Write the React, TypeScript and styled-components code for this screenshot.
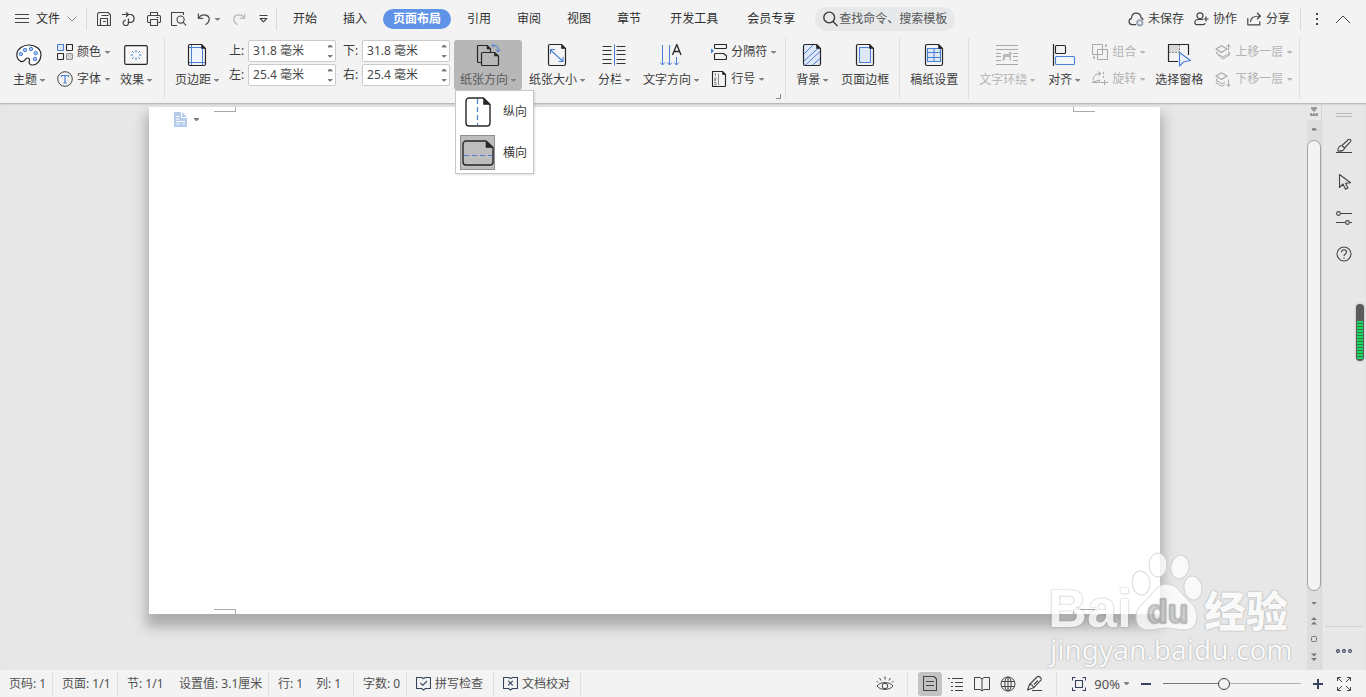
import React from 'react';
import styled, { createGlobalStyle, css } from 'styled-components';

const INK = '#3c3c3c';
const DARK = '#262626';
const BLUE = '#4a7fd6';
const PALE = '#dfe8f7';
const MUTED = '#b4b4b4';

const GlobalStyle = createGlobalStyle`
  *, *::before, *::after { box-sizing: border-box; }
  body {
    margin: 0;
    background: #e7e7e7;
    color: ${INK};
    font: 12px/16px "Noto Sans", "Noto Sans CJK SC", sans-serif;
    overflow: hidden;
  }
  button, input {
    margin: 0;
    padding: 0;
    border: 0;
    background: none;
    color: inherit;
    font: inherit;
  }
  svg { display: block; flex: none; }
`;

/* ---------- shared ---------- */

const Shell = styled.div`
  display: flex;
  flex-direction: column;
  height: 100vh;
`;

const Caret = styled.i<{ $up?: boolean }>`
  flex: none;
  width: 5px;
  height: 3px;
  background: #808080;
  clip-path: ${p => (p.$up
    ? 'polygon(0 100%, 100% 100%, 100% 70%, 60% 0, 40% 0, 0 70%)'
    : 'polygon(0 0, 100% 0, 100% 30%, 60% 100%, 40% 100%, 0 30%)')};
`;

/* ---------- tab bar ---------- */

const TopBar = styled.header`
  display: flex;
  align-items: center;
  height: 38px;
  flex: none;
  background: #f3f3f3;
`;

const TopRule = styled.span`
  width: 1px;
  height: 22px;
  background: #dadada;
`;

const FileButton = styled.button`
  display: flex;
  align-items: center;
  gap: 7px;
  padding: 0 9px 0 15px;
  color: #2e2e2e;
`;

const QuickTools = styled.div`
  display: flex;
  align-items: center;
  padding-left: 4px;
`;

const QuickButton = styled.button<{ $split?: boolean }>`
  display: flex;
  align-items: center;
  justify-content: center;
  gap: 4px;
  width: ${p => (p.$split ? 35 : 25)}px;
  height: 24px;
`;

const Tabs = styled.nav`
  display: flex;
  gap: 6px;
  padding: 0 10px 0 6px;
`;

const Tab = styled.button<{ $active?: boolean; $spaced?: boolean }>`
  height: 20px;
  padding: 0 10px;
  border-radius: 10px;
  line-height: 20px;
  white-space: nowrap;
  color: #2e2e2e;
  margin-left: ${p => (p.$spaced ? 3 : 0)}px;
  ${p => p.$active && css`
    background: #5f93e8;
    color: #fff;
    font-weight: 700;
  `}
`;

const Search = styled.label`
  display: flex;
  align-items: center;
  gap: 1px;
  width: 140px;
  height: 24px;
  padding-left: 8px;
  border-radius: 12px;
  background: #e6e8ea;
  input {
    width: 112px;
    outline: 0;
  }
  input::placeholder {
    color: #555;
    opacity: 1;
  }
`;

const TopActions = styled.div`
  display: flex;
  align-items: center;
  margin-left: auto;
  padding-right: 9px;
`;

const ActionButton = styled.button`
  display: flex;
  align-items: center;
  gap: 4px;
  height: 24px;
  margin-right: 10px;
  white-space: nowrap;
`;

const GlyphButton = styled.button`
  display: flex;
  align-items: center;
  justify-content: center;
  width: 28px;
  height: 24px;
`;

/* ---------- ribbon ---------- */

const Ribbon = styled.section`
  display: flex;
  height: 65px;
  flex: none;
  padding-left: 7px;
  background: #f3f3f3;
`;

const Group = styled.div<{ $roomy?: boolean }>`
  position: relative;
  display: flex;
  gap: 1px;
  padding: 2px ${p => (p.$roomy ? 2 : 0)}px 0 0;
`;

const GroupRule = styled.span`
  width: 1px;
  height: 61px;
  margin: 0 4px;
  background: #dfdfdf;
`;

const BigButton = styled.button<{ $open?: boolean }>`
  display: flex;
  flex-direction: column;
  align-items: center;
  justify-content: space-between;
  height: 50px;
  padding: 3px 6px 2px;
  border-radius: 3px;
  white-space: nowrap;
  background: ${p => (p.$open ? '#b7b7b7' : 'transparent')};
  color: ${p => (p.$open ? '#5a5a5a' : INK)};
  &:disabled { color: ${MUTED}; }
  &:disabled i { background: ${MUTED}; }
`;

const IconSlot = styled.span`
  display: flex;
  align-items: center;
  justify-content: center;
  height: 24px;
`;

const Caption = styled.span`
  display: flex;
  align-items: center;
  gap: 3px;
`;

const Stack = styled.div`
  display: flex;
  flex-direction: column;
  gap: 3px;
`;

const SmallButton = styled.button`
  display: flex;
  align-items: center;
  gap: 4px;
  height: 24px;
  padding: 0 3px 0 5px;
  white-space: nowrap;
  &:disabled { color: ${MUTED}; }
  &:disabled i { background: ${MUTED}; }
`;

const Margins = styled.div`
  display: grid;
  grid-template-columns: auto auto;
  grid-auto-rows: 22px;
  gap: 2px 7px;
  margin: 0 3px;
`;

const Field = styled.label`
  display: flex;
  align-items: center;
`;

const FieldName = styled.span`
  width: 19px;
`;

const Spinner = styled.span`
  display: flex;
  width: 88px;
  height: 22px;
  border: 1px solid #cbcbcb;
  border-radius: 2px;
  background: #fff;
  input {
    flex: 1;
    min-width: 0;
    padding-left: 4px;
    color: #4a4a4a;
    outline: 0;
  }
`;

const Steps = styled.span`
  display: flex;
  flex-direction: column;
  width: 10px;
  button {
    flex: 1;
    display: flex;
    align-items: center;
    justify-content: center;
  }
`;

const Launcher = styled.button`
  position: absolute;
  right: 0;
  bottom: 4px;
  width: 5px;
  height: 5px;
  border: solid #8a8a8a;
  border-width: 0 1px 1px 0;
`;

const MenuAnchor = styled.div`
  position: relative;
`;

const Menu = styled.ul`
  position: absolute;
  z-index: 5;
  top: 50px;
  left: 1px;
  display: flex;
  flex-direction: column;
  gap: 6px;
  margin: 0;
  padding: 3px 6px 3px 4px;
  list-style: none;
  border: 1px solid #c6c6c6;
  background: #fff;
  box-shadow: 1px 1px 2px rgba(0, 0, 0, .12);
`;

const MenuItem = styled.button<{ $selected?: boolean }>`
  display: flex;
  align-items: center;
  gap: 8px;
  white-space: nowrap;
  > span {
    display: flex;
    align-items: center;
    justify-content: center;
    width: 35px;
    height: 35px;
    border: 1px solid ${p => (p.$selected ? '#8f8f8f' : 'transparent')};
    background: ${p => (p.$selected ? '#bdbdbd' : 'transparent')};
  }
`;

/* ---------- workspace ---------- */

const Workspace = styled.main`
  position: relative;
  display: flex;
  flex: 1;
  min-height: 0;
  overflow: hidden;
  background: #e7e7e7;
  box-shadow: inset 0 2px 2px -1px rgba(0, 0, 0, .25);
`;

const Canvas = styled.div`
  display: flex;
  flex: 1;
  padding: 4px 147px 56px 149px;
`;

const Paper = styled.article`
  position: relative;
  flex: 1;
  padding: 5px 25px;
  background: #fff;
  box-shadow: 0 10px 12px 3px rgba(0, 0, 0, .26);
`;

const PasteTag = styled.button`
  display: flex;
  align-items: center;
  gap: 7px;
`;

const Crop = styled.span<{ $v: 'top' | 'bottom'; $h: 'left' | 'right' }>`
  position: absolute;
  width: 22px;
  height: 5px;
  ${p => p.$v}: 0;
  ${p => p.$h}: 65px;
  border: 0 solid #a9a9a9;
  border-${p => (p.$v === 'top' ? 'bottom' : 'top')}-width: 1px;
  border-${p => (p.$h === 'left' ? 'right' : 'left')}-width: 1px;
`;

const ScrollColumn = styled.div`
  display: flex;
  flex-direction: column;
  align-items: center;
  width: 14px;
  padding: 4px 0;
  background: linear-gradient(transparent 17px, #dedede 17px);
  button {
    display: flex;
    align-items: center;
    justify-content: center;
    width: 14px;
    height: 18px;
  }
`;

const ScrollThumb = styled.div`
  flex: 1;
  width: 14px;
  margin: 2px 0 3px;
  border: 1px solid #a3a3a3;
  border-radius: 7px;
  background: #f3f3f3;
`;

const SidePane = styled.aside`
  display: flex;
  flex-direction: column;
  align-items: center;
  width: 45px;
  padding-top: 10px;
  border-left: 1px solid #d5d5d5;
`;

const Grip = styled.span`
  width: 16px;
  height: 4px;
  margin-bottom: 11px;
  border: solid #bcbcbc;
  border-width: 1px 0;
`;

const SideButton = styled.button`
  display: flex;
  align-items: center;
  justify-content: center;
  width: 36px;
  height: 36px;
`;

const SideMore = styled.div`
  display: flex;
  justify-content: center;
  margin-top: auto;
  width: 38px;
  padding: 6px 0 1px;
  border-top: 1px solid #d2d2d2;
`;

const Meter = styled.div`
  position: absolute;
  top: 201px;
  right: 2px;
  width: 8px;
  height: 57px;
  padding: 17px 1px 2px;
  border-radius: 4px;
  background: #5c5c5c;
  box-shadow: 0 0 2px rgba(0, 0, 0, .3);
  &::before {
    content: '';
    display: block;
    height: 38px;
    background: repeating-linear-gradient(#1ed760 0 2px, #2a7d47 2px 3px);
  }
`;

const Watermark = styled.div`
  position: absolute;
  z-index: 3;
  right: 74px;
  bottom: 4px;
  width: 246px;
  opacity: .78;
  color: #fff;
  pointer-events: none;
  text-shadow: 0 0 2px rgba(0, 0, 0, .3), 0 0 1px rgba(0, 0, 0, .25);
`;

const WatermarkTop = styled.div`
  display: flex;
  align-items: flex-end;
  height: 84px;
  padding-left: 2px;
  b {
    width: 82px;
    font: 700 54px/48px "Liberation Sans", sans-serif;
  }
  strong {
    font: 900 42px/46px "Noto Sans CJK SC", sans-serif;
    white-space: nowrap;
  }
`;

const WatermarkUrl = styled.div`
  padding-left: 4px;
  font: 400 28px/34px "Noto Sans", sans-serif;
  white-space: nowrap;
`;

/* ---------- status bar ---------- */

const StatusBar = styled.footer`
  display: flex;
  align-items: center;
  height: 27px;
  flex: none;
  background: #f3f3f3;
  color: #505050;
`;

const StatusItem = styled.button<{ $w: number }>`
  display: flex;
  align-items: center;
  gap: 4px;
  width: ${p => p.$w}px;
  height: 27px;
  padding-left: 9px;
  white-space: nowrap;
`;

const StatusRule = styled.span<{ $gap?: number }>`
  width: 1px;
  height: 24px;
  margin: 0 ${p => p.$gap ?? 0}px;
  background: #dfdfdf;
`;

const StatusRight = styled.div`
  display: flex;
  align-items: center;
  margin-left: auto;
  padding-right: 9px;
`;

const ViewButton = styled.button<{ $active?: boolean }>`
  display: flex;
  align-items: center;
  justify-content: center;
  width: 24px;
  height: 24px;
  margin: 0 1px;
  border-radius: 3px;
  background: ${p => (p.$active ? '#c3c3c3' : 'transparent')};
`;

const ZoomValue = styled.button`
  display: flex;
  align-items: center;
  gap: 4px;
  margin: 0 4px 0 2px;
  font-size: 13px;
`;

const ZoomSlider = styled.input`
  width: 138px;
  height: 16px;
  margin: 0 4px;
  appearance: none;
  background: linear-gradient(90deg, #777 44%, #b0b0b0 44%) center / 100% 1px no-repeat;
  &::-webkit-slider-thumb {
    appearance: none;
    width: 12px;
    height: 12px;
    border: 1px solid #444;
    border-radius: 6px;
    background: #f3f3f3;
  }
`;

/* ---------- icons ---------- */

type IconProps = { w: number; h: number; c?: string; sw?: number; children: React.ReactNode };
const Icon = ({ w, h, c = '#444', sw = 1, children }: IconProps) => (
  <svg width={w} height={h} viewBox={`0 0 ${w} ${h}`} fill="none" stroke={c} strokeWidth={sw} strokeLinejoin="round" aria-hidden="true">
    {children}
  </svg>
);

const Sheet = ({ children }: { children?: React.ReactNode }) => (
  <Icon w={20} h={24} c={DARK}>
    {children}
    <path d="M3 1.5H14.5L18.5 5.5V21a1.5 1.5 0 0 1-1.5 1.5H3A1.5 1.5 0 0 1 1.5 21V3A1.5 1.5 0 0 1 3 1.5Z" strokeWidth="1.2" />
    <path d="M14.5 1.5V5.5H18.5Z" fill={DARK} strokeWidth=".6" />
  </Icon>
);

const SaveIcon = () => (
  <Icon w={14} h={14}>
    <path d="M2.5 .5H11L13.5 3V12.5A1 1 0 0 1 12.5 13.5H1.5A1 1 0 0 1 .5 12.5V2.5A2 2 0 0 1 2.5 .5ZM3.5 13.5V6.5H10.5V13.5M4.5 3.5H11.5M6 9.5H9" strokeWidth="1.1" />
  </Icon>
);
const ExportIcon = () => (
  <Icon w={14} h={14} sw={1.2}>
    <path d="M0 2.5H9A4 4 0 0 1 9 10.3H5.5M4 .2L6.4 2.5L4 4.8M6.5 6.5V10.5A2.7 2.7 0 1 1 3.8 8.2" />
  </Icon>
);
const PrintIcon = () => (
  <Icon w={14} h={14} sw={1.1}>
    <path d="M3.5 3.5V.5H10.5V3.5M3.5 10.5H1.7A1.2 1.2 0 0 1 .5 9.3V4.7A1.2 1.2 0 0 1 1.7 3.5H12.3A1.2 1.2 0 0 1 13.5 4.7V9.3A1.2 1.2 0 0 1 12.3 10.5H10.5M3.5 7.5H10.5V13.5H3.5ZM9.5 5.5H11.5" />
  </Icon>
);
const PreviewIcon = () => (
  <Icon w={16} h={14} sw={1.1}>
    <path d="M6 13.5H1.5A1 1 0 0 1 .5 12.5V.5H12.5V3" />
    <circle cx="9.6" cy="7.6" r="3.6" />
    <path d="M12 10.2L15.2 13.6" />
  </Icon>
);
const UndoIcon = ({ flip }: { flip?: boolean }) => (
  <Icon w={14} h={14} sw={1.3} c={flip ? '#bcbcbc' : '#555'}>
    <path d={flip ? 'M12.6 1.5V6.3H7.8M12.4 6C9.5 1.5 1.8 2 1.8 7.5C1.8 10 3.5 11.5 5.5 12.8' : 'M1.4 1.5V6.3H6.2M1.6 6C4.5 1.5 12.2 2 12.2 7.5C12.2 10 10.5 11.5 8.5 12.8'} />
  </Icon>
);
const MoreIcon = () => (
  <Icon w={9} h={8} sw={1.1}><path d="M.5 .5H8.5M1.2 3.5L4.5 6.8L7.8 3.5Z" /></Icon>
);
const CloudIcon = () => (
  <Icon w={16} h={15} sw={1.2}>
    <path d="M8 12.6H4A3.2 3.2 0 0 1 3.5 6.3C3.6 3 5.8 1.2 8.2 1.2C10.8 1.2 12.8 3 13 5.6A3 3 0 0 1 15 8" />
    <circle cx="11.8" cy="10.8" r="3.6" fill="#9aa3b5" stroke="none" />
    <path d="M10.5 9.5L13.1 12.1M13.1 9.5L10.5 12.1" stroke="#fff" />
  </Icon>
);
const PeopleIcon = () => (
  <Icon w={15} h={14} sw={1.2}>
    <circle cx="6" cy="3.8" r="3" />
    <path d="M9 7.5H4.5C2 7.5 .8 8.8 .8 10.5C.8 12 1.8 12.6 3 12.6H9C10.3 12.6 11 11.8 11 11M12 4.5V9.5M9.5 7H14.5" />
  </Icon>
);
const ShareIcon = () => (
  <Icon w={15} h={14} sw={1.2}>
    <path d="M.8 6V12.8H12.8V9.5M3.5 10C3.5 6 6.5 4 12.8 4M10 .8L13.4 4L10 7.2" />
  </Icon>
);

const PaletteIcon = () => (
  <Icon w={26} h={22} c={DARK} sw={1.2}>
    <path d="M5 17.4C1.6 15.8.7 12.5.9 9.8C1.4 4.5 7 1 13 1C19.5 1 25 5 25 10.8C25 16.5 21 21 16.4 21C13.6 21 12.6 19 13.4 16.8C13.9 15.2 13 13.8 11.3 14C8.8 14.2 8.5 18.8 5 17.4Z" fill="#fff" />
    <g stroke={BLUE} strokeWidth="1" fill="#a9c4f0">
      <circle cx="4.9" cy="10" r="1.7" /><circle cx="9" cy="6" r="1.7" /><circle cx="15" cy="5" r="1.7" />
      <circle cx="19.7" cy="9.2" r="1.7" /><circle cx="19" cy="15" r="1.7" />
    </g>
  </Icon>
);
const ColorsIcon = () => (
  <Icon w={16} h={16} c={DARK} sw={1.1}>
    <rect x=".5" y=".5" width="6" height="6" rx=".6" stroke={BLUE} fill={PALE} />
    <rect x="9.5" y=".5" width="6" height="6" rx=".6" />
    <rect x=".5" y="9.5" width="6" height="6" rx=".6" />
    <g stroke="#8d8d8d" strokeWidth="1"><rect x="9.5" y="9.5" width="6" height="6" rx=".6" /><path d="M9.5 13L13 9.5M10 15.5L15.5 10M13 15.5L15.5 13" /></g>
  </Icon>
);
const FontIcon = () => (
  <Icon w={16} h={16}>
    <circle cx="8" cy="8" r="7.3" stroke="#444" />
    <path d="M4.5 6V4.5H11.5V6M8 4.5V12M6.3 12H9.7" stroke={BLUE} strokeWidth="1.2" />
  </Icon>
);
const EffectIcon = () => (
  <Icon w={24} h={20} c={DARK}>
    <rect x=".7" y=".7" width="22.6" height="18.6" rx="1.6" strokeWidth="1.2" fill="#f8f8f8" />
    <path d="M12 5V7.5M12 12.5V15M6.5 10H9M15 10H17.5M8 6L9.8 7.8M14.2 12.2L16 14M16 6L14.2 7.8M9.8 12.2L8 14" stroke={BLUE} />
  </Icon>
);
const MarginIcon = () => (
  <Sheet><path d="M2 4.5H18M2 19.5H18M4.5 2V22M15.5 2V22" stroke={BLUE} /><rect x="4.5" y="4.5" width="11" height="15" stroke={BLUE} fill="#f1f5fc" /></Sheet>
);
const OrientIcon = () => (
  <Icon w={26} h={24} c={DARK} sw={1.2}>
    <path d="M6 19.5H3.5A1 1 0 0 1 2.5 18.5V3.5A1 1 0 0 1 3.5 2.5H12L15.5 6V9" />
    <path d="M12 2.5V6H15.5Z" fill={DARK} strokeWidth=".6" />
    <path d="M7.5 9.5H19.5L23.5 13V21.5A1 1 0 0 1 22.5 22.5H7.5A1 1 0 0 1 6.5 21.5V10.5A1 1 0 0 1 7.5 9.5Z" />
    <path d="M19.5 9.5V13H23Z" fill={DARK} strokeWidth=".6" />
    <path d="M17 2.5H20A3 3 0 0 1 23 5.5V8.5M19 .5L17 2.5L19 4.5M20.8 6.5L23 9L25.2 6.5" stroke={BLUE} strokeWidth="1" />
  </Icon>
);
const SizeIcon = () => (
  <Sheet><path d="M3.5 7L16 18.5M3.5 11V6.5H8M16 14V18.5H11.5" stroke={BLUE} strokeWidth="1.1" /></Sheet>
);
const ColumnsIcon = () => (
  <Icon w={24} h={22} c="#333">
    <path d="M.5 2.5H9.5M.5 6.5H9.5M.5 10.5H9.5M.5 15.5H9.5M.5 19.5H9.5M14.5 2.5H23.5M14.5 6.5H23.5M14.5 10.5H23.5M14.5 15.5H23.5M14.5 19.5H23.5" strokeWidth="1.1" />
    <path d="M12.5 .5V21.5" stroke={BLUE} />
  </Icon>
);
const DirectionIcon = () => (
  <Icon w={24} h={24} c={DARK}>
    <path d="M3.5 2V22M1.2 19.5L3.5 22L5.8 19.5M10.5 2V22M8.2 19.5L10.5 22L12.8 19.5M17.5 14V22M15.2 19.5L17.5 22L19.8 19.5" stroke={BLUE} />
    <path d="M13.5 12L17.8 1.5L22 12M15 8.5H20.5" strokeWidth="1.3" />
  </Icon>
);
const BreakIcon = () => (
  <Icon w={16} h={16} c={DARK} sw={1.1}>
    <path d="M3.5.5V3.5A1 1 0 0 0 4.5 4.5H14.5A1 1 0 0 0 15.5 3.5V.5H3.5M3.5 15.5V10.5A1 1 0 0 1 4.5 9.5H12.5L15.5 12V14.5A1 1 0 0 1 14.5 15.5H3.5Z" />
    <path d="M0 4.2V9.4L3 6.8Z" fill={BLUE} stroke="none" />
  </Icon>
);
const LineNoIcon = () => (
  <Icon w={16} h={16} c={DARK} sw={1.1}>
    <path d="M1.5 .5H11.5L14.5 3.5V14.5A1 1 0 0 1 13.5 15.5H1.5Z" />
    <path d="M11.5.5V3.5H14.5Z" fill={DARK} strokeWidth=".6" />
    <path d="M3.5 2.5H4.5V5M3 7H5V8.5H3.5V9.5H5M3 11.5H5V14H3M7.5 2.5V14" stroke="#888" strokeWidth="1" />
  </Icon>
);
const BackgroundIcon = () => (
  <Sheet><rect x="2" y="2" width="16" height="20" fill={PALE} stroke="none" /><path d="M2 11L11 2M2 18L17 4.5M3 22.5L18 8.5M10 22.5L18 15.5" stroke={BLUE} /></Sheet>
);
const BorderIcon = () => (
  <Sheet><rect x="4.5" y="4.5" width="11" height="15" stroke={BLUE} fill={PALE} strokeWidth="1.1" /></Sheet>
);
const GridIcon = () => (
  <Sheet><rect x="3.5" y="5.5" width="13" height="13" stroke={BLUE} fill={PALE} strokeWidth="1.1" /><path d="M4 9.5H16M4 14.5H16M10 5.5V9.5M10 9.5V18.5" stroke={BLUE} /></Sheet>
);
const WrapIcon = () => (
  <Icon w={24} h={22} c="#a8a8a8">
    <path d="M1 1.5H23M1 5.5H23M1 9.5H6M18 9.5H23M1 12.5H6M18 12.5H23M1 16.5H6M18 16.5H23M1 20.5H23" />
    <path d="M7.5 16.5L8 11L9.5 10H13.5L14.5 7.5L17 8.5L16 11V16.5H14.5V13H10.5L9.5 16.5Z" fill="#b9b9b9" stroke="none" />
  </Icon>
);
const AlignIcon = () => (
  <Icon w={24} h={24} c={DARK}>
    <path d="M1.5 1V23" strokeWidth="1.2" />
    <rect x="3.5" y="2.5" width="10" height="8" rx="1" strokeWidth="1.1" />
    <rect x="3.5" y="13.5" width="19" height="8" rx="1" stroke={BLUE} strokeWidth="1.1" fill="#f2f6fd" />
  </Icon>
);
const CombineIcon = () => (
  <Icon w={16} h={16} c="#a8a8a8"><rect x=".5" y=".5" width="10" height="10" /><rect x="5.5" y="5.5" width="10" height="10" /><path d="M13 1.5H15M1 13.5H3" strokeWidth="2" /></Icon>
);
const RotateIcon = () => (
  <Icon w={16} h={16} c="#a8a8a8"><path d="M1 9.5C1 5 4 2.5 8.5 2.5M6 .5L8.8 2.5L6 5M0 11.5L7.5 9V11.5H0M8.5 11.5H16M12.5 9V14M11.5 1V3M11.5 5V7" /></Icon>
);
const PaneIcon = () => (
  <Icon w={24} h={24} c={DARK}>
    <rect x="1" y="1" width="11" height="8" fill="#d8d8d8" stroke="none" />
    <path d="M11 18.5H1.5V1.5H21.5V12" strokeWidth="1.2" />
    <path d="M2 9.5H12.5M12.5 2V9" stroke="#8d8d8d" strokeDasharray="2 1" />
    <path d="M12.5 9.5V23L16.5 19L23.5 17.5Z" stroke={BLUE} strokeWidth="1.1" fill="#eaf0fb" />
  </Icon>
);
const LayerIcon = ({ down }: { down?: boolean }) => (
  <Icon w={16} h={16} c="#a8a8a8">
    <path d="M1 5L6.5 1.8L12 5L6.5 8.5Z" strokeWidth="1.2" />
    <path d={down ? 'M3 7.5L1 9L7 12.8L10 11M2.5 10.5L.8 11.8L7 15.2L10 13.5' : 'M3 7.5L1 9L8 13L15.2 9L13 7.8M3 11L8 15L15.2 10.5'} />
    <path d={down ? 'M13.5 8.5V15.3M11.5 13.2L13.5 15.4L15.5 13.2' : 'M13.5 6.5V.6M11.5 2.8L13.5 .6L15.5 2.8'} />
  </Icon>
);
const PortraitIcon = () => (
  <Icon w={26} h={30} c={DARK} sw={1.4}>
    <path d="M4 1H18.5L25 7.5V26A3 3 0 0 1 22 29H4A3 3 0 0 1 1 26V4A3 3 0 0 1 4 1Z" fill="#fff" />
    <path d="M18.5 1V7.5H25Z" fill={DARK} strokeWidth=".6" />
    <path d="M12.5 2V28" stroke={BLUE} strokeWidth="1.2" strokeDasharray="5 3" />
  </Icon>
);
const LandscapeIcon = () => (
  <Icon w={32} h={26} c={DARK} sw={1.4}>
    <path d="M4 1H24L31 7.5V22A3 3 0 0 1 28 25H4A3 3 0 0 1 1 22V4A3 3 0 0 1 4 1Z" />
    <path d="M24 1V7.5H31Z" fill={DARK} strokeWidth=".6" />
    <path d="M2 15.5H30" stroke={BLUE} strokeWidth="1.2" strokeDasharray="5 3" />
  </Icon>
);
const CheckBookIcon = ({ cross }: { cross?: boolean }) => (
  <Icon w={15} h={15} c="#36425c" sw={1.1}>
    <path d="M5.5 1.5H.5V12.5H5.5L7.5 14L9.5 12.5H14.5V1.5H9.5L7.5 2.6Z" />
    <path d={cross ? 'M5.2 4.8L9.8 9.4M9.8 4.8L5.2 9.4' : 'M4.4 7L6.8 9.4L11 5'} />
  </Icon>
);
const PenIcon = () => (
  <Icon w={17} h={17} sw={1.1}><path d="M1.5 15L3.5 9.5L11.5 1.5C13 .8 15.8 3.2 15.2 4.8L7.5 12.8L1.5 15ZM3.5 9.5C5.5 9.5 7.3 11 7.5 12.8M6 15.5H16M12 5.5L8 9.5" /></Icon>
);

/* ---------- pieces ---------- */

type ToolProps = { icon: React.ReactNode; label: string; caret?: boolean; open?: boolean; disabled?: boolean };

const Big = ({ icon, label, caret = true, open, disabled }: ToolProps) => (
  <BigButton $open={open} disabled={disabled} aria-expanded={open}>
    <IconSlot>{icon}</IconSlot>
    <Caption>{label}{caret && <Caret />}</Caption>
  </BigButton>
);

const Small = ({ icon, label, disabled }: ToolProps) => (
  <SmallButton disabled={disabled}>{icon}{label}<Caret /></SmallButton>
);

const MarginField = ({ label, value }: { label: string; value: string }) => (
  <Field>
    <FieldName>{label}:</FieldName>
    <Spinner>
      <input type="text" defaultValue={value} />
      <Steps>
        <button aria-label="增加"><Caret $up /></button>
        <button aria-label="减少"><Caret /></button>
      </Steps>
    </Spinner>
  </Field>
);

const tabs: { name: string; spaced?: boolean }[] = [
  { name: '开始' }, { name: '插入' }, { name: '页面布局' }, { name: '引用' }, { name: '审阅' },
  { name: '视图' }, { name: '章节' }, { name: '开发工具', spaced: true }, { name: '会员专享', spaced: true },
];

export default function App() {
  return (
    <Shell>
      <GlobalStyle />
      <TopBar>
        <FileButton>
          <Icon w={14} h={10}><path d="M0 .5H14M0 4.5H14M0 8.5H14" /></Icon>
          文件
          <Icon w={10} h={6} c="#888"><path d="M.5.5L5 5L9.5.5" /></Icon>
        </FileButton>
        <TopRule />
        <QuickTools>
          <QuickButton aria-label="保存"><SaveIcon /></QuickButton>
          <QuickButton aria-label="输出"><ExportIcon /></QuickButton>
          <QuickButton aria-label="打印"><PrintIcon /></QuickButton>
          <QuickButton aria-label="打印预览"><PreviewIcon /></QuickButton>
          <QuickButton $split aria-label="撤消"><UndoIcon /><Caret /></QuickButton>
          <QuickButton aria-label="恢复"><UndoIcon flip /></QuickButton>
          <QuickButton aria-label="更多"><MoreIcon /></QuickButton>
        </QuickTools>
        <TopRule />
        <Tabs>
          {tabs.map(t => (
            <Tab key={t.name} $spaced={t.spaced} $active={t.name === '页面布局'}>{t.name}</Tab>
          ))}
        </Tabs>
        <Search>
          <Icon w={15} h={16} c="#333" sw={1.3}><circle cx="6.2" cy="6.5" r="5.4" /><path d="M10 10.5L14.5 15" /></Icon>
          <input type="text" aria-label="搜索" placeholder="查找命令、搜索模板" />
        </Search>
        <TopActions>
          <ActionButton><CloudIcon />未保存</ActionButton>
          <ActionButton><PeopleIcon />协作</ActionButton>
          <ActionButton><ShareIcon />分享</ActionButton>
          <TopRule />
          <GlyphButton aria-label="菜单"><Icon w={14} h={14}><path d="M9 1V3M9 6V8M9 11V13" strokeWidth="2" /></Icon></GlyphButton>
          <GlyphButton aria-label="折叠功能区"><Icon w={16} h={9}><path d="M1 8L8 1L15 8" /></Icon></GlyphButton>
        </TopActions>
      </TopBar>

      <Ribbon>
        <Group $roomy>
          <Big icon={<PaletteIcon />} label="主题" />
          <Stack>
            <Small icon={<ColorsIcon />} label="颜色" />
            <Small icon={<FontIcon />} label="字体" />
          </Stack>
          <Big icon={<EffectIcon />} label="效果" />
        </Group>
        <GroupRule />
        <Group $roomy>
          <Big icon={<MarginIcon />} label="页边距" />
          <Margins>
            <MarginField label="上" value="31.8 毫米" />
            <MarginField label="下" value="31.8 毫米" />
            <MarginField label="左" value="25.4 毫米" />
            <MarginField label="右" value="25.4 毫米" />
          </Margins>
          <MenuAnchor>
            <Big icon={<OrientIcon />} label="纸张方向" open />
            <Menu>
              <li><MenuItem><span><PortraitIcon /></span>纵向</MenuItem></li>
              <li><MenuItem $selected><span><LandscapeIcon /></span>横向</MenuItem></li>
            </Menu>
          </MenuAnchor>
          <Big icon={<SizeIcon />} label="纸张大小" />
          <Big icon={<ColumnsIcon />} label="分栏" />
          <Big icon={<DirectionIcon />} label="文字方向" />
          <Stack>
            <Small icon={<BreakIcon />} label="分隔符" />
            <Small icon={<LineNoIcon />} label="行号" />
          </Stack>
          <Launcher aria-label="页面设置" />
        </Group>
        <GroupRule />
        <Group>
          <Big icon={<BackgroundIcon />} label="背景" />
          <Big icon={<BorderIcon />} label="页面边框" caret={false} />
        </Group>
        <GroupRule />
        <Group>
          <Big icon={<GridIcon />} label="稿纸设置" caret={false} />
        </Group>
        <GroupRule />
        <Group>
          <Big icon={<WrapIcon />} label="文字环绕" disabled />
          <Big icon={<AlignIcon />} label="对齐" />
          <Stack>
            <Small icon={<CombineIcon />} label="组合" disabled />
            <Small icon={<RotateIcon />} label="旋转" disabled />
          </Stack>
          <Big icon={<PaneIcon />} label="选择窗格" caret={false} />
          <Stack>
            <Small icon={<LayerIcon />} label="上移一层" disabled />
            <Small icon={<LayerIcon down />} label="下移一层" disabled />
          </Stack>
        </Group>
        <GroupRule />
      </Ribbon>

      <Workspace>
        <Canvas>
          <Paper>
            <PasteTag aria-label="文档选项">
              <svg width="13" height="15" viewBox="0 0 13 15" aria-hidden="true">
                <path d="M0 0H8L13 5V15H0Z" fill="#b4cbec" />
                <path d="M7.5 0V5.5H13M2 4.5H5.5M2 7H5.5M2 9.5H11M2 12H6M8 12H11" stroke="#fff" fill="none" />
              </svg>
              <Caret />
            </PasteTag>
            <Crop $v="top" $h="left" />
            <Crop $v="top" $h="right" />
            <Crop $v="bottom" $h="left" />
            <Crop $v="bottom" $h="right" />
          </Paper>
        </Canvas>
        <ScrollColumn>
          <Icon w={8} h={13} c="none"><path d="M1 0H7V2L4 5L1 2ZM0 6H2V7H3V6H5V7H6V6H8V9H0Z" fill="#9a9a9a" /></Icon>
          <button aria-label="向上滚动"><Caret $up /></button>
          <ScrollThumb />
          <button aria-label="向下滚动"><Caret /></button>
          <button aria-label="上一页"><Icon w={6} h={8} c="none"><path d="M0 3L3 0L6 3ZM0 7.5L3 4.5L6 7.5Z" fill="#777" /></Icon></button>
          <button aria-label="选择浏览对象"><Icon w={6} h={6} c="#777"><rect x=".5" y=".5" width="5" height="5" rx="1" /></Icon></button>
          <button aria-label="下一页"><Icon w={6} h={8} c="none"><path d="M0 .5L3 3.5L6 .5ZM0 5L3 8L6 5Z" fill="#777" /></Icon></button>
        </ScrollColumn>
        <SidePane>
          <Grip />
          <SideButton aria-label="样式">
            <Icon w={16} h={16} sw={1.1}><path d="M6 7.5L12.5 1.5C14 .6 15.6 2.2 14.5 3.6L8.5 10M6 7.5L8.5 10M6 7.8C3.5 7.5 2 9.5 1.8 13C5 13.5 8.5 12.5 8.5 10M0 14.5H16" /></Icon>
          </SideButton>
          <SideButton aria-label="选择">
            <Icon w={16} h={18} sw={1.1}><path d="M3.5 1.5V14.5L7 11L9.5 16.3L12 15L9.5 10.2L14.5 9.8Z" /></Icon>
          </SideButton>
          <SideButton aria-label="属性">
            <Icon w={16} h={14} sw={1.1}><circle cx="2.5" cy="2.5" r="1.9" /><path d="M4.5 2.5H16M0 11.5H9.5M13.5 11.5H16" /><circle cx="11.5" cy="11.5" r="1.9" /></Icon>
          </SideButton>
          <SideButton aria-label="帮助">
            <Icon w={16} h={16} sw={1.1}><circle cx="8" cy="8" r="7" /><path d="M5.5 6.2C5.5 3 10.5 3 10.5 6.2C10.5 8 8 8 8 10M8 11.3V12.7" /></Icon>
          </SideButton>
          <SideMore>
            <SideButton aria-label="更多面板">
              <Icon w={16} h={4} c="#36425c" sw={1.1}><circle cx="2" cy="2" r="1.4" /><circle cx="8" cy="2" r="1.4" /><circle cx="14" cy="2" r="1.4" /></Icon>
            </SideButton>
          </SideMore>
        </SidePane>
        <Meter />
        <Watermark>
          <WatermarkTop>
            <b>Bai</b>
            <svg width="74" height="82" viewBox="0 0 74 82" role="img" aria-label="du">
              <g fill="#fff" stroke="#cdcdcd">
                <ellipse cx="11" cy="33" rx="9" ry="12" transform="rotate(-6 11 33)" />
                <ellipse cx="28" cy="15" rx="9" ry="12" />
                <ellipse cx="50" cy="17" rx="9" ry="12" transform="rotate(10 50 17)" />
                <ellipse cx="63" cy="38" rx="9" ry="12" transform="rotate(-8 63 38)" />
                <path d="M37 34C45 34 49 40 54 46C61 53 67 57 67 67C67 76 61 80 54 80C47 80 43 78 36 78C29 78 26 80 19 80C11 80 6 75 6 67C6 57 14 53 20 46C25 40 29 34 37 34Z" />
              </g>
              <text x="17" y="73" fontFamily="Liberation Sans, sans-serif" fontWeight="700" fontSize="34" fill="#cfcfcf" stroke="#b4b4b4" strokeWidth="1">du</text>
            </svg>
            <strong>经验</strong>
          </WatermarkTop>
          <WatermarkUrl>jingyan.baidu.com</WatermarkUrl>
        </Watermark>
      </Workspace>

      <StatusBar>
        <StatusItem $w={52}>页码: 1</StatusItem>
        <StatusRule />
        <StatusItem $w={64}>页面: 1/1</StatusItem>
        <StatusRule />
        <StatusItem $w={52}>节: 1/1</StatusItem>
        <StatusItem $w={98}>设置值: 3.1厘米</StatusItem>
        <StatusRule />
        <StatusItem $w={38}>行: 1</StatusItem>
        <StatusItem $w={46}>列: 1</StatusItem>
        <StatusRule />
        <StatusItem $w={52}>字数: 0</StatusItem>
        <StatusRule />
        <StatusItem $w={86}><CheckBookIcon />拼写检查</StatusItem>
        <StatusRule />
        <StatusItem $w={86}><CheckBookIcon cross />文档校对</StatusItem>
        <StatusRule />
        <StatusRight>
          <ViewButton aria-label="护眼模式">
            <Icon w={18} h={16}><path d="M1 10C4 5.5 14 5.5 17 10C14 14.5 4 14.5 1 10ZM9 .5V3.5M3.5 2L5 4.5M14.5 2L13 4.5M.5 5L2 6.5M17.5 5L16 6.5" /><circle cx="9" cy="10" r="2.8" /></Icon>
          </ViewButton>
          <StatusRule $gap={9} />
          <ViewButton $active aria-label="页面视图">
            <Icon w={14} h={15} sw={1.1}><path d="M.5.5H11L13.5 3V14.5H.5ZM3 5.5H11M3 9.5H11" /></Icon>
          </ViewButton>
          <ViewButton aria-label="大纲视图">
            <Icon w={16} h={14}><path d="M0 1.5H2M4 1.5H15M3 5.5H5M7 5.5H15M3 9.5H5M7 9.5H15M3 13.5H5M7 13.5H15" /></Icon>
          </ViewButton>
          <ViewButton aria-label="阅读版式">
            <Icon w={16} h={16}><path d="M.5 1.5H6L8 3L10 1.5H15.5V13.5H10L8 15L6 13.5H.5ZM8 3V15" /></Icon>
          </ViewButton>
          <ViewButton aria-label="网页版式">
            <Icon w={16} h={16}><circle cx="8" cy="8" r="7" /><ellipse cx="8" cy="8" rx="3.2" ry="7" /><path d="M1.5 5.5H14.5M1.5 10.5H14.5M8 1V15" /></Icon>
          </ViewButton>
          <ViewButton aria-label="写作模式"><PenIcon /></ViewButton>
          <StatusRule $gap={9} />
          <ViewButton aria-label="适合页面">
            <Icon w={14} h={14} c="#36425c" sw={1.1}><path d="M.5 3.5V.5H3.5M10.5.5H13.5V3.5M13.5 10.5V13.5H10.5M3.5 13.5H.5V10.5" /><rect x="3.5" y="3.5" width="7" height="7" /></Icon>
          </ViewButton>
          <ZoomValue>90%<Caret /></ZoomValue>
          <ViewButton aria-label="缩小"><Icon w={10} h={10} c="#36425c" sw={2}><path d="M0 5H10" /></Icon></ViewButton>
          <ZoomSlider type="range" min={0} max={1000} defaultValue={437} aria-label="缩放" />
          <ViewButton aria-label="放大"><Icon w={10} h={10} c="#36425c" sw={2}><path d="M0 5H10M5 0V10" /></Icon></ViewButton>
          <ViewButton aria-label="全屏显示">
            <Icon w={16} h={16}><path d="M1.5 5V1.5H5M1.5 1.5L6 6M11 1.5H14.5V5M14.5 1.5L10 6M14.5 11V14.5H11M14.5 14.5L10 10M5 14.5H1.5V11M1.5 14.5L6 10" /></Icon>
          </ViewButton>
        </StatusRight>
      </StatusBar>
    </Shell>
  );
}
